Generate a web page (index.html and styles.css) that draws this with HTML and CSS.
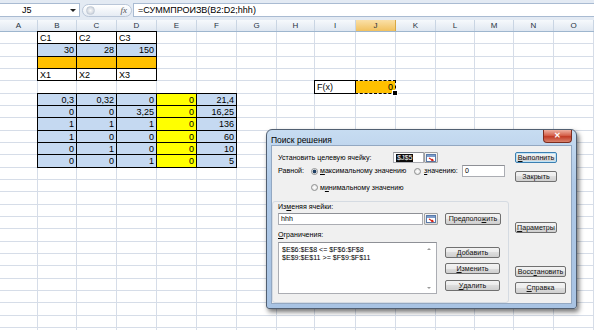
FILE: index.html
```html
<!DOCTYPE html>
<html lang="ru">
  <head>
    <meta charset="UTF-8" />
    <title>Поиск решения</title>
    <link rel="stylesheet" href="styles.css">
  </head>
  <body>
    <div class="app">
      <div class="fbar">
        <div class="namebox"><span class="ref">J5</span><span class="dd"></span></div>
        <div class="fxzone"><span class="pill"><span class="grip"></span><i class="fx">fx</i></span></div>
        <div class="formula">=СУММПРОИЗВ(B2:D2;hhh)</div>
      </div>

      <div class="heads">
        <div>A</div><div>B</div><div>C</div><div>D</div><div>E</div>
        <div>F</div><div>G</div><div>H</div><div>I</div><div class="sel">J</div>
        <div>K</div><div>L</div><div>M</div><div>N</div><div>O</div>
      </div>

      <div class="sheet">
        <div class="cols">
          <div></div><div></div><div></div><div></div><div></div>
          <div></div><div></div><div></div><div></div><div></div>
          <div></div><div></div><div></div><div></div><div></div>
        </div>
        <div class="rows">
          <div class="row"><div></div><div class="b">C1</div><div class="b">C2</div><div class="b">C3</div></div>
          <div class="row"><div></div><div class="b blue r">30</div><div class="b blue r">28</div><div class="b blue r">150</div></div>
          <div class="row"><div></div><div class="b org"></div><div class="b org"></div><div class="b org"></div></div>
          <div class="row"><div></div><div class="b">X1</div><div class="b">X2</div><div class="b">X3</div></div>
          <div class="row"><div class="col-i b">F(x)</div><div class="ants r">0</div></div>
          <div class="row"><div></div><div class="b blue r">0,3</div><div class="b blue r">0,32</div><div class="b blue r">0</div><div class="b yel r">0</div><div class="b blue r">21,4</div></div>
          <div class="row"><div></div><div class="b blue r">0</div><div class="b blue r">0</div><div class="b blue r">3,25</div><div class="b yel r">0</div><div class="b blue r">16,25</div></div>
          <div class="row"><div></div><div class="b blue r">1</div><div class="b blue r">1</div><div class="b blue r">1</div><div class="b yel r">0</div><div class="b blue r">136</div></div>
          <div class="row"><div></div><div class="b blue r">1</div><div class="b blue r">0</div><div class="b blue r">0</div><div class="b yel r">0</div><div class="b blue r">60</div></div>
          <div class="row"><div></div><div class="b blue r">0</div><div class="b blue r">1</div><div class="b blue r">0</div><div class="b yel r">0</div><div class="b blue r">10</div></div>
          <div class="row"><div></div><div class="b blue r">0</div><div class="b blue r">0</div><div class="b blue r">1</div><div class="b yel r">0</div><div class="b blue r">5</div></div>
          <div class="row"></div><div class="row"></div><div class="row"></div><div class="row"></div>
          <div class="row"></div><div class="row"></div><div class="row"></div><div class="row"></div>
          <div class="row"></div><div class="row"></div><div class="row"></div><div class="row"></div>
          <div class="row"></div><div class="row"></div>
        </div>
      </div>

      <div class="dlg">
        <div class="dlg-title">
          <span>Поиск решения</span>
          <span class="close">✕</span>
        </div>
        <div class="client">
          <div class="main">
            <div class="top">
              <div class="line l1">
                <span class="lbl">Установить целевую ячейку:</span>
                <span class="field target"><span class="hl">$J$5</span></span>
                <span class="refbtn">
                  <svg width="10" height="8" viewBox="0 0 10 8"><rect x="0.5" y="0.5" width="9" height="7" fill="#fff" stroke="#5a7aa8"/><rect x="1" y="1" width="8" height="2" fill="#7d9dcb"/><path d="M3 4 L7 6.5 M5.2 6.6 L7 6.5 L6.4 4.9" stroke="#d4261c" stroke-width="1.2" fill="none"/></svg>
                </span>
              </div>
              <div class="line l2">
                <span class="lbl eq">Равной:</span>
                <span class="rwrap"><span class="radio on"></span></span>
                <span class="opt-max"><u>м</u>аксимальному значению</span>
                <span class="rwrap r2"><span class="radio"></span></span>
                <span class="opt-val"><u>з</u>начению:</span>
                <span class="field val">0</span>
              </div>
              <div class="line l3">
                <span class="rwrap"><span class="radio"></span></span>
                <span>м<u>и</u>нимальному значению</span>
              </div>
            </div>
            <div class="group">
              <div class="glbl">Из<u>м</u>еняя ячейки:</div>
              <div class="line l4">
                <span class="field cells">hhh</span>
                <span class="refbtn">
                  <svg width="10" height="8" viewBox="0 0 10 8"><rect x="0.5" y="0.5" width="9" height="7" fill="#fff" stroke="#5a7aa8"/><rect x="1" y="1" width="8" height="2" fill="#7d9dcb"/><path d="M3 4 L7 6.5 M5.2 6.6 L7 6.5 L6.4 4.9" stroke="#d4261c" stroke-width="1.2" fill="none"/></svg>
                </span>
                <span class="btn guess">Предполо<u>ж</u>ить</span>
              </div>
              <div class="glbl g2"><u>О</u>граничения:</div>
              <div class="cons">
                <div class="list">
                  <div>$E$6:$E$8 &lt;= $F$6:$F$8</div>
                  <div>$E$9:$E$11 &gt;= $F$9:$F$11</div>
                  <span class="sb up"></span>
                  <span class="sb down"></span>
                </div>
                <div class="cbtns">
                  <span class="btn add"><u>Д</u>обавить</span>
                  <span class="btn edit"><u>И</u>зменить</span>
                  <span class="btn del"><u>У</u>далить</span>
                </div>
              </div>
            </div>
          </div>
          <div class="side">
            <span class="btn run def"><u>В</u>ыполнить</span>
            <span class="btn shut">Закрыть</span>
            <span class="btn opts"><u>П</u>араметры</span>
            <span class="btn reset wide">Восс<u>т</u>ановить</span>
            <span class="btn help wide"><u>С</u>правка</span>
          </div>
        </div>
      </div>
    </div>
  </body>
</html>
```

FILE: styles.css
```css
body {
  margin: 0;
  background: #fff;
  font-family: "Liberation Sans", Arial, sans-serif;
  color: #000;
  overflow: hidden;
}
.app {
  --cols: 38px 39px 40px 40px 40px 40px 40px 38px 41px 40px 40px 39px 39px 40px 40px;
  position: relative;
  width: 594px;
  height: 330px;
  overflow: hidden;
}

/* formula bar */
.fbar {
  display: flex;
  height: 20px;
  box-sizing: border-box;
  padding: 3px 0;
  background: #e3eaf3;
}
.namebox {
  width: 80px;
  box-sizing: border-box;
  background: #fff;
  border: 1px solid #a9bbd2;
  border-left: none;
  display: flex;
  align-items: center;
  font-size: 9px;
}
.namebox .ref {
  padding-left: 22px;
}
.namebox .dd {
  margin-left: auto;
  margin-right: 3px;
  border-left: 3px solid transparent;
  border-right: 3px solid transparent;
  border-top: 3px solid #222;
}
.fxzone {
  width: 53px;
  display: flex;
  align-items: center;
  padding: 0 1px 0 2px;
  box-sizing: border-box;
}
.pill {
  flex: 1;
  height: 13px;
  box-sizing: border-box;
  border: 1px solid #b9c6d8;
  border-radius: 7px;
  background: linear-gradient(#ffffff, #e6ecf4);
  display: flex;
  align-items: center;
  padding: 0 4px 0 3px;
}
.grip {
  width: 7px;
  height: 7px;
  border-radius: 50%;
  background: radial-gradient(#fafafa, #bfc7d2);
  border: 1px solid #c3ccd8;
}
.fx {
  margin-left: auto;
  font-family: "Liberation Serif", serif;
  font-size: 9px;
  color: #555;
}
.formula {
  flex: 1;
  background: #fff;
  border: 1px solid #a9bbd2;
  border-right: none;
  font-size: 9px;
  line-height: 12px;
  padding-left: 4px;
}

/* column headers */
.heads {
  display: grid;
  grid-template-columns: var(--cols);
  height: 12px;
  box-sizing: border-box;
  border-bottom: 1px solid #9eb6ce;
  background: linear-gradient(#f6f9fc, #dfe7f1);
}
.heads div {
  border-right: 1px solid #c9d5e3;
  text-align: center;
  font-size: 8px;
  line-height: 11px;
  color: #27333f;
}
.heads .sel {
  background: linear-gradient(#fae0a8, #f1c15f);
  border-right-color: #d8a843;
}

/* sheet */
.sheet {
  display: grid;
}
.cols,
.rows {
  grid-area: 1 / 1;
}
.cols {
  display: grid;
  grid-template-columns: var(--cols);
}
.cols div {
  border-right: 1px solid #d6dde8;
}
.row {
  display: grid;
  grid-template-columns: var(--cols);
  height: 12px;
  box-sizing: border-box;
  border-bottom: 1px solid #d6dde8;
}
.row:nth-child(3n+2) {
  height: 13px;
}
.row > div {
  font-size: 9px;
  line-height: 12px;
  padding: 0 2px;
  white-space: nowrap;
  overflow: hidden;
}
.r {
  text-align: right;
}
.b {
  margin-right: 1px;
  box-shadow: 0 0 0 1px #000;
}
.blue {
  background: #c5d9f1;
}
.org {
  background: #ffc000;
}
.yel {
  background: #ffff00;
}
.col-i {
  grid-column-start: 9;
}
.ants {
  position: relative;
  margin-right: 1px;
  background: #ffc000;
  outline: 1px dashed #000;
  overflow: visible !important;
}
.ants::after {
  content: "";
  position: absolute;
  right: -3px;
  bottom: -3px;
  width: 4px;
  height: 4px;
  background: #000;
  border: 1px solid #fff;
}

/* solver dialog */
.dlg {
  position: absolute;
  left: 266px;
  top: 129px;
  width: 311px;
  height: 180px;
  box-sizing: border-box;
  border: 1px solid #515f71;
  border-radius: 6px 6px 3px 3px;
  background: linear-gradient(#c7dcf1, #afc9e7 30%, #a8c3e3);
  box-shadow: 2px 3px 5px rgba(0, 0, 0, 0.55);
  padding: 0 4px 4px;
  display: flex;
  flex-direction: column;
  font-size: 7.1px;
  white-space: nowrap;
}
.dlg-title {
  height: 16px;
  display: flex;
  align-items: flex-start;
}
.dlg-title span:first-child {
  padding-top: 5px;
  font-size: 8.5px;
}
.close {
  margin-left: auto;
  width: 29px;
  height: 13px;
  box-sizing: border-box;
  border: 1px solid #7c2d1f;
  border-top: none;
  border-radius: 0 0 4px 4px;
  background: linear-gradient(#eeb1a2, #d5624c 45%, #c23c26 55%, #d9826c);
  color: #fff;
  font-size: 8px;
  font-weight: bold;
  line-height: 12px;
  text-align: center;
}
.client {
  flex: 1;
  display: flex;
  background: #f0f0f0;
  border: 1px solid #93a8c2;
}
.main {
  width: 237px;
}
.top {
  height: 49px;
}
.line {
  display: flex;
  align-items: center;
}
.l1 {
  margin-top: 6px;
  height: 11px;
}
.l2 {
  margin-top: 2px;
  height: 12px;
}
.l3 {
  margin-top: 5px;
  height: 11px;
  padding-left: 39px;
}
.lbl {
  width: 115px;
  padding-left: 6px;
}
.lbl.eq {
  width: 33px;
}
.rwrap {
  width: 9px;
  flex: none;
  display: flex;
}
.r2 {
  width: 10px;
}
.radio {
  width: 7px;
  height: 7px;
  box-sizing: border-box;
  border: 1px solid #8e8f8f;
  border-radius: 50%;
  background: radial-gradient(#ffffff, #dcdcdc);
}
.radio.on {
  background: radial-gradient(circle, #1f3f63 0 1.6px, #f4f4f4 2.2px);
}
.opt-max {
  width: 94px;
  flex: none;
  overflow: hidden;
}
.opt-val {
  width: 38px;
  flex: none;
}
.field {
  box-sizing: border-box;
  height: 11px;
  background: #fff;
  border: 1px solid #abadb3;
  border-top-color: #8e9096;
  display: flex;
  align-items: center;
  padding-left: 2px;
  flex: none;
}
.target {
  width: 31px;
}
.hl {
  background: #0c0c0c;
  color: #fff;
  padding: 0 1px;
}
.val {
  width: 43px;
  height: 12px;
}
.refbtn {
  width: 14px;
  height: 11px;
  box-sizing: border-box;
  border: 1px solid #a0a0a0;
  border-radius: 1px;
  background: linear-gradient(#f6f6f6, #dadada);
  display: flex;
  align-items: center;
  justify-content: center;
  flex: none;
}
.group {
  height: 102px;
  box-sizing: border-box;
  border: 1px solid #d5dbe2;
  border-radius: 3px;
  padding-left: 5px;
}
.glbl {
  margin-top: 1px;
  height: 9px;
  line-height: 9px;
}
.g2 {
  margin-top: 6px;
}
.l4 {
  margin-top: 1px;
  height: 12px;
}
.cells {
  width: 145px;
  height: 12px;
}
.l4 .refbtn {
  margin-left: 1px;
  height: 12px;
}
.btn {
  box-sizing: border-box;
  height: 11px;
  border: 1px solid #707070;
  border-radius: 2px;
  background: linear-gradient(#f3f3f3, #ebebeb 50%, #dddddd 50%, #cfcfcf);
  display: flex;
  align-items: center;
  justify-content: center;
  color: #111;
}
.guess {
  margin-left: 7px;
  width: 56px;
  height: 12px;
}
.cons {
  display: flex;
  margin-top: 2px;
}
.list {
  position: relative;
  width: 159px;
  height: 52px;
  box-sizing: border-box;
  background: #fff;
  border: 1px solid #abadb3;
  border-top-color: #8e9096;
  padding: 3px 3px;
  line-height: 8px;
}
.sb {
  position: absolute;
  right: 5px;
  border-left: 2px solid transparent;
  border-right: 2px solid transparent;
}
.sb.up {
  top: 5px;
  border-bottom: 2px solid #9a9a9a;
}
.sb.down {
  bottom: 4px;
  border-top: 2px solid #9a9a9a;
}
.cbtns {
  margin-left: 8px;
  width: 55px;
  display: flex;
  flex-direction: column;
}
.cbtns .btn {
  height: 11px;
}
.add {
  margin-top: 5px;
}
.edit {
  margin-top: 5px;
}
.del {
  margin-top: 6px;
}
.side {
  padding-left: 6px;
  display: flex;
  flex-direction: column;
  align-items: flex-start;
}
.side .btn {
  width: 42px;
}
.side .wide {
  width: 51px;
}
.def {
  border-color: #3c7fb1;
  box-shadow: inset 0 0 0 1px #bfe4f8;
}
.run {
  margin-top: 6px;
}
.shut {
  margin-top: 8px;
}
.opts {
  margin-top: 40px;
}
.reset {
  margin-top: 33px;
}
.help {
  margin-top: 5px;
  height: 12px !important;
}
```
